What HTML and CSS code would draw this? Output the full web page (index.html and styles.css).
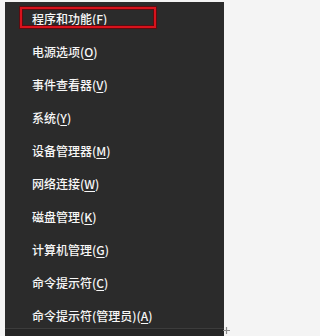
FILE: index.html
```html
<!DOCTYPE html>
<html lang="zh-CN">
<head>
<meta charset="utf-8">
<link rel="stylesheet" href="styles.css">
</head>
<body>
<div class="menu">
  <ul class="items">
    <li class="item highlight">程序和功能(<u>F</u>)</li>
    <li class="item">电源选项(<u>O</u>)</li>
    <li class="item">事件查看器(<u>V</u>)</li>
    <li class="item">系统(<u>Y</u>)</li>
    <li class="item">设备管理器(<u>M</u>)</li>
    <li class="item">网络连接(<u>W</u>)</li>
    <li class="item">磁盘管理(<u>K</u>)</li>
    <li class="item">计算机管理(<u>G</u>)</li>
    <li class="item">命令提示符(<u>C</u>)</li>
    <li class="item">命令提示符(管理员)(<u>A</u>)</li>
  </ul>
  <div class="footer"></div>
  <svg class="cursor" width="7" height="7" viewBox="0 0 7 7"><path d="M3.5 0V7M0 3.5H7" stroke="#8a8a8a" stroke-width="1.2"/></svg>
</div>
</body>
</html>
```

FILE: styles.css
```css
html, body {
  margin: 0;
  padding: 0;
  background: #f4f4f4;
}
body {
  width: 230px;
  height: 336px;
  overflow: hidden;
}
.menu {
  position: relative;
  margin: 2px 0 0 5px;
  width: 219px;
  height: 334px;
  background: #2b2b2b;
  display: flex;
  flex-direction: column;
}
.items {
  list-style: none;
  margin: 0;
  padding: 0;
  height: 326px;
}
.item {
  position: relative;
  height: 33px;
  line-height: 33px;
  padding-left: 27px;
  font-family: "Noto Sans CJK SC", "Noto Sans", sans-serif;
  font-size: 12px;
  font-weight: 500;
  color: #f7f7f7;
  white-space: nowrap;
}
.item u {
  text-decoration: underline;
  text-underline-offset: 2px;
}
.highlight::before {
  content: "";
  position: absolute;
  left: 15px;
  top: 5px;
  width: 132px;
  height: 17px;
  border: 2px solid #d8121c;
  box-shadow: 0 0 0 1px #5a0c10, inset 0 0 0 1px #5a0c10;
}
.footer {
  flex: 1;
  border-top: 1px solid #3c3c3c;
  background: #262626;
}
.cursor {
  position: absolute;
  right: -6px;
  bottom: 2px;
}
```
